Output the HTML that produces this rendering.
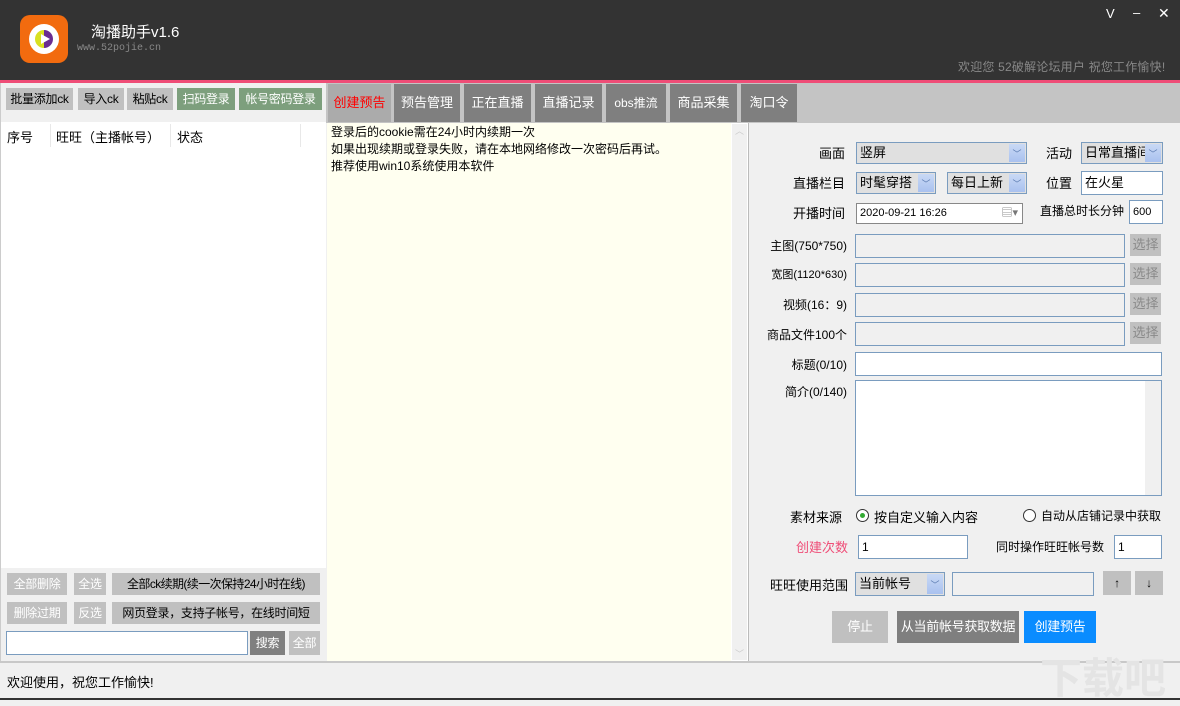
<!DOCTYPE html>
<html><head><meta charset="utf-8"><style>
*{margin:0;padding:0;box-sizing:border-box}
body{width:1180px;height:700px;position:relative;overflow:hidden;background:#f0f0f0;font-family:"Liberation Sans","Noto Sans CJK SC",sans-serif;font-size:13px;color:#000}
.a{position:absolute;white-space:nowrap}
.btn{position:absolute;background:#c0c0c0;color:#000;text-align:center;font-size:12px;line-height:22px;white-space:nowrap;overflow:hidden;letter-spacing:-0.3px}
.g{background:#7d9f7d;color:#fff}
.tab{position:absolute;top:84px;height:38px;background:#7f7f7f;color:#fff;text-align:center;line-height:38px;font-size:13px}
.lbl{position:absolute;font-size:13px;text-align:right;white-space:nowrap}
.in{position:absolute;background:#fff;border:1px solid #7a9cbf;font-size:12px;padding-left:3px;line-height:22px}
.dis{background:#f0f0f0}
.sel{position:absolute;background:#e0e0e0;border:1px solid #7a9cbf;font-size:13px;padding-left:3px;line-height:20px;white-space:nowrap;overflow:hidden}
.sel i{position:absolute;right:1px;top:1px;bottom:1px;width:16px;background:linear-gradient(#c9d9f5,#a9c1ef);font-style:normal;color:#5a7ab0;font-size:9px;text-align:center;line-height:20px}
.xb{position:absolute;width:31px;height:22px;background:#c0c0c0;color:#8a8a8a;text-align:center;line-height:22px;font-size:13px}
</style></head><body>
<div class="a" style="left:0;top:0;width:1180px;height:80px;background:#333"></div>
<div class="a" style="left:20px;top:15px;width:48px;height:48px;border-radius:10px;background:#f26b0f"></div>
<div class="a" style="left:29px;top:24px;width:30px;height:30px;border-radius:50%;background:#fff"></div>
<div class="a" style="left:35px;top:30px;width:18px;height:18px;border-radius:50%;background:linear-gradient(90deg,#d9e021 50%,#6a2c91 50%)"></div>
<div class="a" style="left:41px;top:34px;width:0;height:0;border-left:9px solid #fff;border-top:5px solid transparent;border-bottom:5px solid transparent"></div>
<div class="a" style="left:91px;top:21px;color:#fff;font-size:15px">淘播助手v1.6</div>
<div class="a" style="left:77px;top:43px;color:#888;font-size:10px;font-family:'Liberation Mono',monospace">www.52pojie.cn</div>
<div class="a" style="left:1106px;top:6px;color:#fff;font-size:13px">V</div>
<div class="a" style="left:1133px;top:5px;color:#fff;font-size:13px">–</div>
<div class="a" style="left:1158px;top:5px;color:#fff;font-size:14px">✕</div>
<div class="a" style="left:958px;top:58px;color:#888;font-size:12px;letter-spacing:0.2px">欢迎您 52破解论坛用户 祝您工作愉快!</div>
<div class="a" style="left:0;top:80px;width:1180px;height:3px;background:#ef4d77"></div>
<div class="a" style="left:0;top:83px;width:1180px;height:40px;background:#c4c4c4"></div>
<div class="a" style="left:0;top:83px;width:326px;height:580px;background:#f0f0f0;border-left:1px solid #ccc"></div>
<div class="btn" style="left:6px;top:88px;width:67px">批量添加ck</div>
<div class="btn" style="left:78px;top:88px;width:46px">导入ck</div>
<div class="btn" style="left:127px;top:88px;width:46px">粘贴ck</div>
<div class="btn g" style="left:177px;top:88px;width:58px">扫码登录</div>
<div class="btn g" style="left:239px;top:88px;width:83px">帐号密码登录</div>
<div class="a" style="left:1px;top:122px;width:325px;height:446px;background:#fff"></div>
<div class="a" style="left:7px;top:127px">序号</div>
<div class="a" style="left:50px;top:124px;width:1px;height:23px;background:#e8e8e8"></div>
<div class="a" style="left:56px;top:127px">旺旺（主播帐号）</div>
<div class="a" style="left:170px;top:124px;width:1px;height:23px;background:#e8e8e8"></div>
<div class="a" style="left:177px;top:127px">状态</div>
<div class="a" style="left:300px;top:124px;width:1px;height:23px;background:#e8e8e8"></div>
<div class="btn" style="left:7px;top:573px;width:60px;color:#fff">全部删除</div>
<div class="btn" style="left:74px;top:573px;width:32px;color:#fff">全选</div>
<div class="btn" style="left:112px;top:573px;width:208px;letter-spacing:-0.6px">全部ck续期(续一次保持24小时在线)</div>
<div class="btn" style="left:7px;top:602px;width:60px;color:#fff">删除过期</div>
<div class="btn" style="left:74px;top:602px;width:32px;color:#fff">反选</div>
<div class="btn" style="left:112px;top:602px;width:208px">网页登录，支持子帐号，在线时间短</div>
<div class="in" style="left:6px;top:631px;width:242px;height:24px"></div>
<div class="btn" style="left:250px;top:631px;width:35px;height:24px;background:#808080;color:#fff;line-height:24px">搜索</div>
<div class="btn" style="left:289px;top:631px;width:31px;height:24px;color:#fff;line-height:24px">全部</div>
<div class="tab" style="left:328px;width:63px;background:#ababab;color:#f00">创建预告</div>
<div class="tab" style="left:394px;width:66px">预告管理</div>
<div class="tab" style="left:464px;width:67px">正在直播</div>
<div class="tab" style="left:535px;width:67px">直播记录</div>
<div class="tab" style="left:606px;width:60px;font-size:12px">obs推流</div>
<div class="tab" style="left:670px;width:67px">商品采集</div>
<div class="tab" style="left:741px;width:56px">淘口令</div>
<div class="a" style="left:327px;top:123px;width:405px;height:538px;background:#fffff0"></div>
<div class="a" style="left:731px;top:123px;width:17px;height:538px;background:#f0f0f0;border:1px solid #fff;color:#ccc;font-size:9px;text-align:center">︿<div style="position:absolute;bottom:0;width:100%">﹀</div></div>
<div class="a" style="left:331px;top:124px;line-height:17px;font-size:12px">登录后的cookie需在24小时内续期一次<br>如果出现续期或登录失败，请在本地网络修改一次密码后再试。<br>推荐使用win10系统使用本软件</div>
<div class="a" style="left:748px;top:123px;width:1px;height:538px;background:#bbb"></div>
<div class="lbl" style="left:760px;top:143px;width:85px">画面</div>
<div class="sel" style="left:856px;top:142px;width:171px;height:22px">竖屏<i>﹀</i></div>
<div class="lbl" style="left:1030px;top:143px;width:42px">活动</div>
<div class="sel" style="left:1081px;top:142px;width:82px;height:22px">日常直播间<i>﹀</i></div>
<div class="lbl" style="left:760px;top:173px;width:85px">直播栏目</div>
<div class="sel" style="left:856px;top:172px;width:80px;height:22px">时髦穿搭<i>﹀</i></div>
<div class="sel" style="left:947px;top:172px;width:80px;height:22px">每日上新<i>﹀</i></div>
<div class="lbl" style="left:1030px;top:173px;width:42px">位置</div>
<div class="in" style="left:1081px;top:171px;width:82px;height:24px;font-size:13px">在火星</div>
<div class="lbl" style="left:760px;top:203px;width:85px">开播时间</div>
<div class="in" style="left:856px;top:203px;width:167px;height:21px;border-color:#888;font-size:11px;line-height:19px">2020-09-21 16:26<span style="position:absolute;right:4px;color:#777">▤▾</span></div>
<div class="lbl" style="left:1020px;top:202px;width:104px;font-size:12px">直播总时长分钟</div>
<div class="in" style="left:1129px;top:200px;width:34px;height:24px;font-size:11px">600</div>
<div class="lbl" style="left:750px;top:237px;width:97px;font-size:12px">主图(750*750)</div>
<div class="in dis" style="left:855px;top:234px;width:270px;height:24px"></div><div class="xb" style="left:1130px;top:234px">选择</div>
<div class="lbl" style="left:750px;top:266px;width:97px;font-size:11px">宽图(1120*630)</div>
<div class="in dis" style="left:855px;top:263px;width:270px;height:24px"></div><div class="xb" style="left:1130px;top:263px">选择</div>
<div class="lbl" style="left:750px;top:296px;width:97px;font-size:12px">视频(16：9)</div>
<div class="in dis" style="left:855px;top:293px;width:270px;height:24px"></div><div class="xb" style="left:1130px;top:293px">选择</div>
<div class="lbl" style="left:750px;top:326px;width:97px;font-size:12px">商品文件100个</div>
<div class="in dis" style="left:855px;top:322px;width:270px;height:24px"></div><div class="xb" style="left:1130px;top:322px">选择</div>
<div class="lbl" style="left:750px;top:356px;width:97px;font-size:12px">标题(0/10)</div>
<div class="in" style="left:855px;top:352px;width:307px;height:24px"></div>
<div class="lbl" style="left:750px;top:383px;width:97px;font-size:12px">简介(0/140)</div>
<div class="in" style="left:855px;top:380px;width:307px;height:116px"><div style="position:absolute;right:0;top:0;width:16px;height:100%;background:#f0f0f0"></div></div>
<div class="lbl" style="left:760px;top:507px;width:82px">素材来源</div>
<div class="a" style="left:856px;top:509px;width:13px;height:13px;border-radius:50%;border:1px solid #333;background:#fff"><div style="margin:3px;width:5px;height:5px;border-radius:50%;background:#3a3"></div></div>
<div class="a" style="left:874px;top:507px">按自定义输入内容</div>
<div class="a" style="left:1023px;top:509px;width:13px;height:13px;border-radius:50%;border:1px solid #333;background:#fff"></div>
<div class="a" style="left:1041px;top:507px;font-size:12px">自动从店铺记录中获取</div>
<div class="lbl" style="left:760px;top:537px;width:88px;color:#ef4d77">创建次数</div>
<div class="in" style="left:858px;top:535px;width:110px;height:24px;border-color:#7a9cbf"> 1</div>
<div class="lbl" style="left:980px;top:538px;width:124px;font-size:12px">同时操作旺旺帐号数</div>
<div class="in" style="left:1114px;top:535px;width:48px;height:24px">1</div>
<div class="lbl" style="left:760px;top:575px;width:88px">旺旺使用范围</div>
<div class="sel" style="left:855px;top:572px;width:90px;height:24px;line-height:22px">当前帐号<i style="line-height:22px">﹀</i></div>
<div class="in dis" style="left:952px;top:572px;width:142px;height:24px"></div>
<div class="btn" style="left:1103px;top:571px;width:28px;height:24px;line-height:24px">↑</div>
<div class="btn" style="left:1135px;top:571px;width:28px;height:24px;line-height:24px">↓</div>
<div class="btn" style="left:832px;top:611px;width:56px;height:32px;line-height:32px;color:#fff;font-size:13px">停止</div>
<div class="btn" style="left:897px;top:611px;width:122px;height:32px;line-height:32px;background:#7f7f7f;color:#fff;font-size:13px">从当前帐号获取数据</div>
<div class="btn" style="left:1024px;top:611px;width:72px;height:32px;line-height:32px;background:#0a8cff;color:#fff;font-size:13px">创建预告</div>
<div class="a" style="left:0;top:661px;width:1180px;height:2px;background:#c8c8c8"></div>
<div class="a" style="left:7px;top:672px">欢迎使用，祝您工作愉快!</div>
<div class="a" style="left:1040px;top:645px;color:#e4e4e4;font-size:42px;font-weight:bold">下载吧</div>
<div class="a" style="left:0;top:698px;width:1180px;height:2px;background:#333"></div>
</body></html>
